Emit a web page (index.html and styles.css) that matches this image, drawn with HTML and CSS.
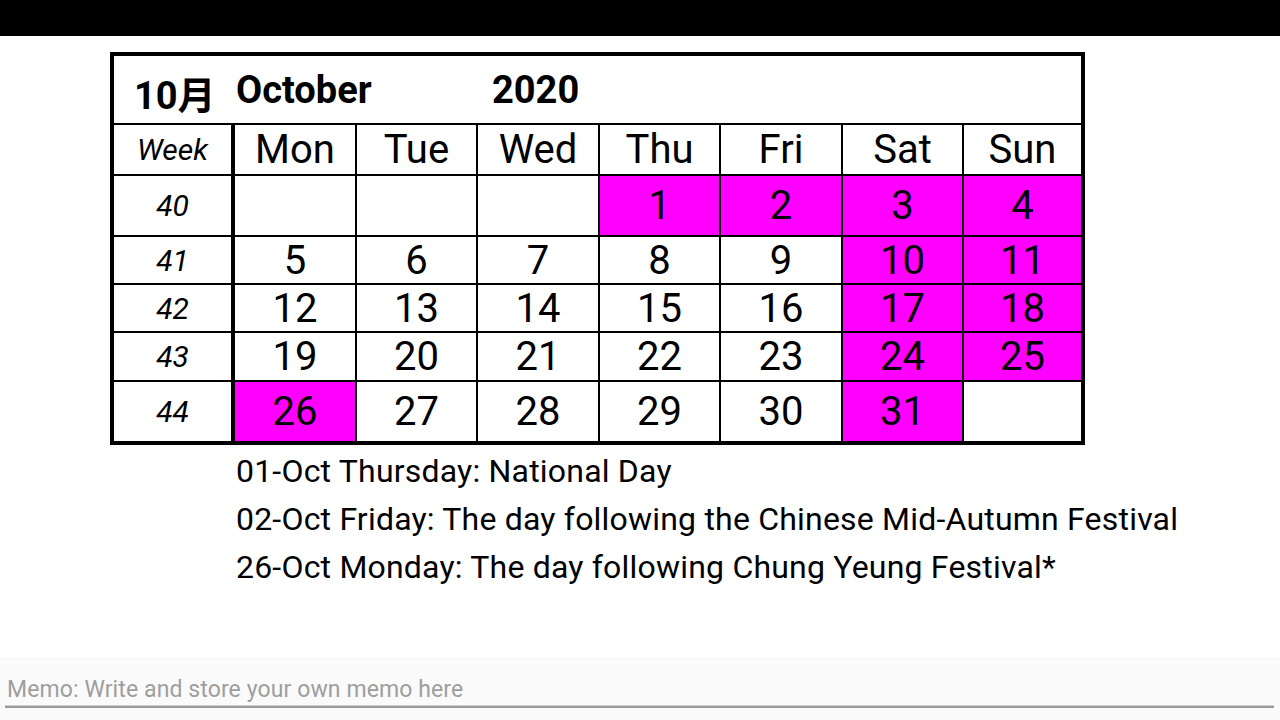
FILE: index.html
```html
<!DOCTYPE html>
<html>
<head>
  <meta charset="utf-8">
  <meta name="viewport" content="width=device-width, initial-scale=1.0">
  <link rel="stylesheet" href="styles.css">
</head>
<body>
  <div class="topbar"></div>
  <div class="cal">
    <div class="cell title">
      <span class="t-month">10月</span>
      <span class="t-name">October</span>
      <span class="t-year">2020</span>
    </div>

    <div class="cell week">Week</div>
    <div class="cell head">Mon</div>
    <div class="cell head">Tue</div>
    <div class="cell head">Wed</div>
    <div class="cell head">Thu</div>
    <div class="cell head">Fri</div>
    <div class="cell head">Sat</div>
    <div class="cell head sun">Sun</div>

    <div class="cell week">40</div>
    <div class="cell day"></div>
    <div class="cell day"></div>
    <div class="cell day"></div>
    <div class="cell day hol">1</div>
    <div class="cell day hol">2</div>
    <div class="cell day hol">3</div>
    <div class="cell day hol sun">4</div>

    <div class="cell week">41</div>
    <div class="cell day">5</div>
    <div class="cell day">6</div>
    <div class="cell day">7</div>
    <div class="cell day">8</div>
    <div class="cell day">9</div>
    <div class="cell day hol">10</div>
    <div class="cell day hol sun">11</div>

    <div class="cell week">42</div>
    <div class="cell day">12</div>
    <div class="cell day">13</div>
    <div class="cell day">14</div>
    <div class="cell day">15</div>
    <div class="cell day">16</div>
    <div class="cell day hol">17</div>
    <div class="cell day hol sun">18</div>

    <div class="cell week">43</div>
    <div class="cell day">19</div>
    <div class="cell day">20</div>
    <div class="cell day">21</div>
    <div class="cell day">22</div>
    <div class="cell day">23</div>
    <div class="cell day hol">24</div>
    <div class="cell day hol sun">25</div>

    <div class="cell week last">44</div>
    <div class="cell day hol last">26</div>
    <div class="cell day last">27</div>
    <div class="cell day last">28</div>
    <div class="cell day last">29</div>
    <div class="cell day last">30</div>
    <div class="cell day hol last">31</div>
    <div class="cell day sun last"></div>
  </div>

  <div class="holidays">
    <div>01-Oct Thursday: National Day</div>
    <div>02-Oct Friday: The day following the Chinese Mid-Autumn Festival</div>
    <div>26-Oct Monday: The day following Chung Yeung Festival*</div>
  </div>

  <div class="memo">
    <input type="text" class="memo-input" placeholder="Memo: Write and store your own memo here">
  </div>
</body>
</html>
```

FILE: styles.css
```css
html, body {
  margin: 0;
  padding: 0;
  height: 100%;
  overflow: hidden;
  font-family: Roboto, "Noto Sans CJK SC", sans-serif;
  color: #000;
  background: #fff;
}
body {
  display: flex;
  flex-direction: column;
}
.topbar {
  height: 36px;
  background: #000;
  flex-shrink: 0;
}
.cal {
  margin: 16px 0 0 110px;
  width: 975px;
  box-sizing: border-box;
  border: 4px solid #000;
  display: grid;
  grid-template-columns: 121px 122px 121px 122px 121px 122px 121px 117px;
  grid-template-rows: 69px 51px 61px 48px 48px 49px 59px;
}
.cell {
  box-sizing: border-box;
  border-right: 2px solid #000;
  border-bottom: 2px solid #000;
  display: flex;
  align-items: center;
  justify-content: center;
}
.cell.sun { border-right: none; }
.cell.last { border-bottom: none; }
.title {
  grid-column: 1 / -1;
  border-right: none;
  justify-content: flex-start;
  padding-left: 20px;
  font-weight: bold;
  font-size: 38px;
}
.t-month {
  width: 102px;
  padding-top: 5px;
}
.t-name { width: 256px; }
.week {
  border-right: 4px solid #000;
  font-style: italic;
  font-size: 30px;
}
.head, .day {
  font-size: 40px;
}
.hol { background: #ff00ff; }
.holidays {
  margin: 2px 0 0 236px;
  font-size: 32px;
  line-height: 48px;
  letter-spacing: 0.2px;
}
.memo {
  margin-top: auto;
  height: 63px;
  background: #fafafa;
  flex-shrink: 0;
}
.memo-input {
  display: block;
  box-sizing: border-box;
  width: calc(100% - 11px);
  height: 51px;
  margin: 0 6px 0 5px;
  padding: 15px 2px 0;
  border: none;
  border-bottom: 2px solid #9a9a9a;
  box-shadow: 0 -1px 0 #d0d0d0 inset;
  background: transparent;
  font-family: Roboto, sans-serif;
  font-size: 23px;
  letter-spacing: 0.1px;
  outline: none;
}
.memo-input::placeholder { color: #9e9e9e; }
```
